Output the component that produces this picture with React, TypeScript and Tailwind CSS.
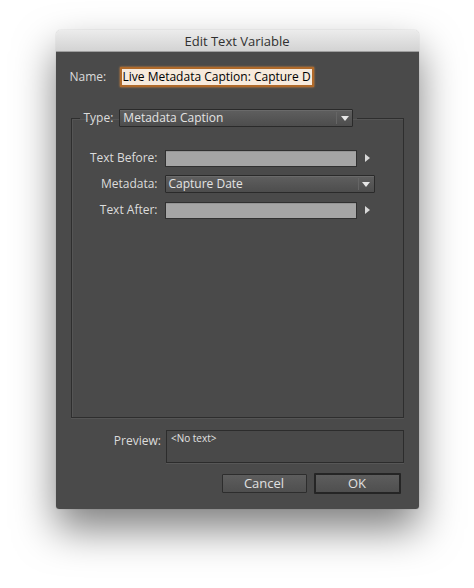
import React from 'react';

const font = "font-['Open_Sans','Liberation_Sans',sans-serif]";

const ArrowRight = () => (
    <svg width="5" height="8" viewBox="0 0 5 8" className="shrink-0">
        <path d="M0 0 L5 4 L0 8 Z" fill="#d8d8d8" />
    </svg>
);

const ArrowDown = () => (
    <svg width="8" height="5" viewBox="0 0 8 5">
        <path d="M0 0 L8 0 L4 5 Z" fill="#e6e6e6" />
    </svg>
);

const Dropdown: React.FC<{ value: string; width: string }> = ({ value, width }) => (
    <div className={`${width} h-[18px] flex items-center rounded-[1px] border border-[#2a2a2a] bg-gradient-to-b from-[#5f5f5f] to-[#4d4d4d] shadow-[inset_0_1px_0_#6a6a6a]`}>
        <span className="flex-1 pl-[3px] text-[12px] leading-[16px] text-[#e4e4e4] truncate">{value}</span>
        <span className="h-[12px] w-px bg-[#3a3a3a] border-r border-[#656565]" />
        <span className="w-[15px] flex items-center justify-center">
            <ArrowDown />
        </span>
    </div>
);

const GrayField = () => (
    <div className="w-[192px] h-[17px] border border-[#303030] bg-[#a5a5a5] shadow-[inset_0_1px_0_#949494]" />
);

export default function App() {
    return (
        <div className={`w-[474px] min-h-[588px] bg-white flex justify-center pt-[30px] ${font}`}>
            <div className="w-[363px] h-[479px] flex flex-col rounded-t-[5px] rounded-b-[3px] overflow-hidden shadow-[0_20px_40px_rgba(0,0,0,0.5),0_0_1px_rgba(0,0,0,0.35)]">
                {/* Title bar */}
                <div className="h-[22px] shrink-0 flex items-center justify-center pt-[2px] bg-gradient-to-b from-[#ececec] to-[#d3d3d3] border-b border-[#9e9e9e]">
                    <span className="text-[13px] text-[#303030] leading-none">Edit Text Variable</span>
                </div>

                {/* Body */}
                <div className="flex-1 bg-[#4a4a4a] pl-[14px] pr-[15px] pt-[15px] flex flex-col">
                    {/* Name */}
                    <div className="flex items-center h-[20px]">
                        <span className="w-[50px] text-[12px] text-[#dcdcdc]">Name:</span>
                        <div className="w-[194px] h-[20px] border-2 border-[#b06a2a] bg-[#f7eadc] flex items-center overflow-hidden shadow-[0_0_2px_#d88a40]">
                            <span className="pl-[1px] text-[12px] text-black whitespace-nowrap leading-none">Live Metadata Caption: Capture D</span>
                        </div>
                    </div>

                    {/* Group box */}
                    <fieldset className="mt-[22px] ml-[1px] h-[309px] border border-[#2e2e2e] shadow-[inset_1px_1px_0_#555,0_1px_0_#555]">
                        <legend className="ml-[8px] px-[4px]">
                            <div className="flex items-center gap-[6px]">
                                <span className="text-[12px] text-[#dcdcdc]">Type:</span>
                                <Dropdown value="Metadata Caption" width="w-[234px]" />
                            </div>
                        </legend>

                        <div className="mt-[22px] flex flex-col gap-[8px]">
                            <div className="flex items-center">
                                <span className="w-[86px] text-right text-[12px] text-[#dcdcdc]">Text Before:</span>
                                <div className="ml-[7px] flex items-center gap-[8px]">
                                    <GrayField />
                                    <ArrowRight />
                                </div>
                            </div>
                            <div className="flex items-center">
                                <span className="w-[86px] text-right text-[12px] text-[#dcdcdc]">Metadata:</span>
                                <div className="ml-[7px]">
                                    <Dropdown value="Capture Date" width="w-[210px]" />
                                </div>
                            </div>
                            <div className="flex items-center">
                                <span className="w-[86px] text-right text-[12px] text-[#dcdcdc]">Text After:</span>
                                <div className="ml-[7px] flex items-center gap-[8px]">
                                    <GrayField />
                                    <ArrowRight />
                                </div>
                            </div>
                        </div>
                    </fieldset>

                    {/* Preview */}
                    <div className="mt-[12px] flex items-start">
                        <span className="w-[92px] mt-[3px] text-right text-[12px] leading-[16px] text-[#dcdcdc]">Preview:</span>
                        <div className="ml-[5px] w-[239px] h-[33px] border border-[#2c2c2c] bg-[#494949] shadow-[0_1px_0_#575757]">
                            <span className="block pl-[4px] pt-[1px] text-[10px] leading-[13px] text-[#e2e2e2]">&lt;No text&gt;</span>
                        </div>
                    </div>

                    {/* Buttons */}
                    <div className="mt-[10px] mr-[3px] flex items-center justify-end gap-[7px]">
                        <button className="w-[85px] h-[19px] rounded-[1px] border border-[#2d2d2d] bg-gradient-to-b from-[#5d5d5d] to-[#4f4f4f] text-[13px] leading-none text-[#e0e0e0]">
                            Cancel
                        </button>
                        <button className="w-[87px] h-[21px] rounded-[1px] border-2 border-[#252525] bg-gradient-to-b from-[#5d5d5d] to-[#4f4f4f] text-[13px] leading-none text-[#e0e0e0]">
                            OK
                        </button>
                    </div>
                </div>
            </div>
        </div>
    );
}
